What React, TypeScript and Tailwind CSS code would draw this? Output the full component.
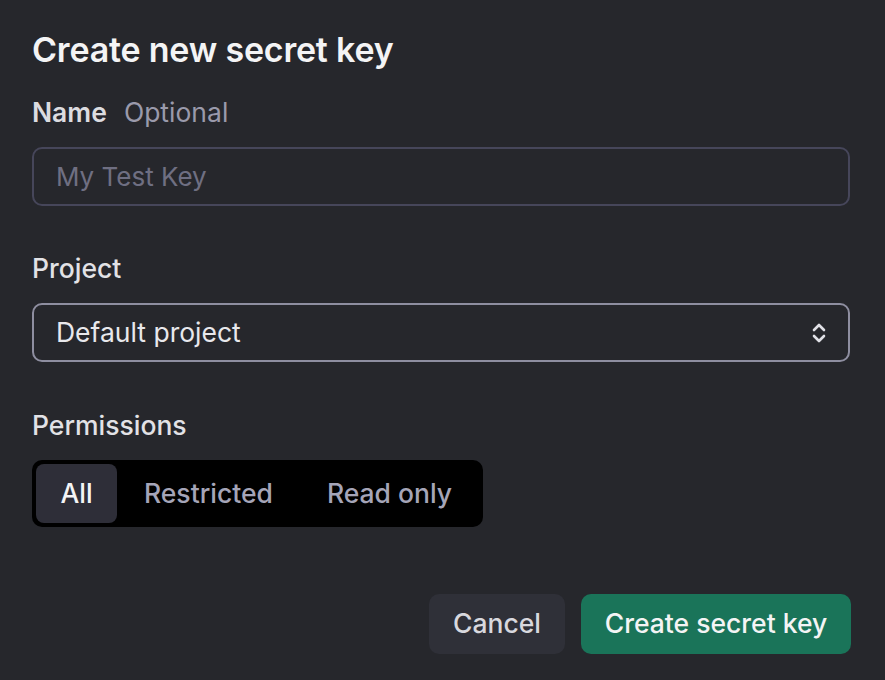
import React from "react";

export default function App() {
  return (
    <div
      className="w-[885px] h-[680px] bg-[#26272c] text-white px-8 pt-[28px] overflow-hidden"
      style={{ fontFamily: "Inter, 'Noto Sans', sans-serif" }}
    >
      <h1 className="text-[34px] leading-[44px] font-semibold text-[#f4f4f5] tracking-[-0.2px]">
        Create new secret key
      </h1>

      <div className="mt-[24px] flex items-baseline gap-[17px] text-[26.5px] leading-[32px]">
        <span className="font-semibold text-[#dcdce0]">Name</span>
        <span className="text-[#9a9aab]">Optional</span>
      </div>
      <div className="mt-[19px] h-[59px] w-[818px] rounded-[10px] border-[2px] border-[#46465a] flex items-center px-[22px]">
        <span className="text-[26px] text-[#6f6f82]">My Test Key</span>
      </div>

      <div className="mt-[46px] text-[26.5px] leading-[32px] font-medium text-[#e2e2e6]">Project</div>
      <div className="mt-[19px] h-[59px] w-[818px] rounded-[10px] border-[2px] border-[#8e8ea0] flex items-center justify-between pl-[22px] pr-[20px]">
        <span className="text-[26.5px] text-[#e8e8ec]">Default project</span>
        <svg width="18" height="24" viewBox="0 0 18 24" fill="none" stroke="#e0e0e6" strokeWidth="2.6" strokeLinecap="round" strokeLinejoin="round">
          <path d="M4 9 L9 4 L14 9" />
          <path d="M4 15 L9 20 L14 15" />
        </svg>
      </div>

      <div className="mt-[47px] text-[26.5px] leading-[32px] font-medium text-[#e2e2e6]">Permissions</div>
      <div className="mt-[19px] inline-flex items-center bg-black rounded-[10px] p-[4px] h-[67px]">
        <div className="h-[59px] w-[81px] rounded-[8px] bg-[#2e2e38] flex items-center justify-center text-[26.5px] font-medium text-[#f4f4f5]">
          All
        </div>
        <div className="h-[59px] px-[27px] flex items-center text-[26.5px] font-medium text-[#a5a5b8]">Restricted</div>
        <div className="h-[59px] pl-[27px] pr-[27px] flex items-center text-[26.5px] font-medium text-[#a5a5b8]">Read only</div>
      </div>

      <div className="mt-[67px] flex justify-end gap-[16px] w-[819px]">
        <button className="h-[60px] w-[136px] rounded-[10px] bg-[#2f3038] text-[26.5px] font-medium text-[#d8d8de]">
          Cancel
        </button>
        <button className="h-[60px] w-[270px] rounded-[10px] bg-[#1a7459] text-[26.5px] font-medium text-[#f4f4f5]">
          Create secret key
        </button>
      </div>
    </div>
  );
}
